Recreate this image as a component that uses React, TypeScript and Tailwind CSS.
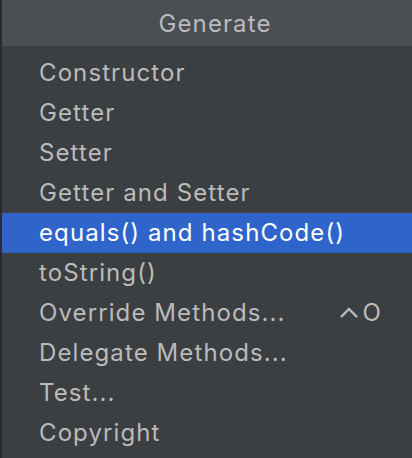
import React from 'react';

const items = [
  { label: 'Constructor' },
  { label: 'Getter' },
  { label: 'Setter' },
  { label: 'Getter and Setter' },
  { label: 'equals() and hashCode()', selected: true },
  { label: 'toString()' },
  { label: 'Override Methods...', shortcut: true },
  { label: 'Delegate Methods...' },
  { label: 'Test...' },
  { label: 'Copyright' },
];

const App = () => {
  return (
    <div
      className="w-[412px] h-[458px] overflow-hidden bg-[#2b2b2b] pl-[2px]"
      style={{ fontFamily: 'Inter, "Liberation Sans", sans-serif' }}
    >
      <div className="h-full bg-[#3c3f41] flex flex-col">
        {/* header */}
        <div className="h-[46px] shrink-0 bg-[#4b4e52] flex items-center justify-center pl-[16px] pt-[1px] text-[24px] tracking-[1.1px] text-[#bbbbbb]">
          Generate
        </div>

        {/* list */}
        <div className="pt-[7px] flex flex-col">
          {items.map((item) => (
            <div
              key={item.label}
              className={`h-[40px] flex items-center justify-between pl-[37px] pr-[30px] text-[24px] tracking-[1.1px] ${
                item.selected ? 'bg-[#2f65ca] text-white' : 'text-[#bbbbbb]'
              }`}
            >
              <span>{item.label}</span>
              {item.shortcut && (
                <span className="flex items-center gap-[4px]">
                  <svg width="20" height="12" viewBox="0 0 20 12" fill="none">
                    <path d="M2 10 L10 2 L18 10" stroke="#bbbbbb" strokeWidth="2.4" />
                  </svg>
                  <span>O</span>
                </span>
              )}
            </div>
          ))}
        </div>
      </div>
    </div>
  );
};

export default App;
